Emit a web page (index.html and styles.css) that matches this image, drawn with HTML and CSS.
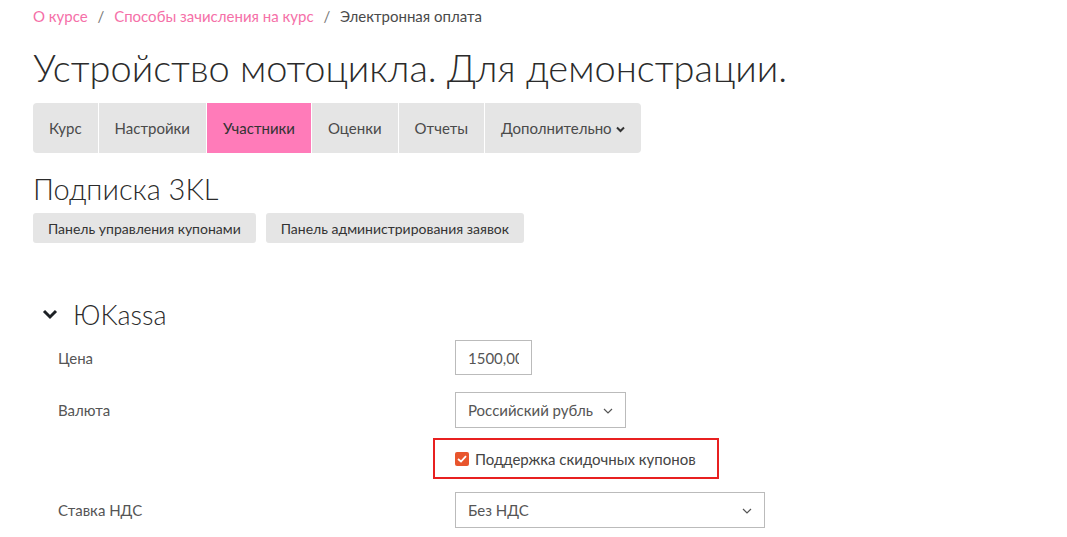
FILE: index.html
```html
<!DOCTYPE html>
<html lang="ru">
<head>
    <meta charset="UTF-8">
    <title>Электронная оплата</title>
    <link rel="stylesheet" href="styles.css">
</head>
<body>
    <div class="page">
        <nav class="breadcrumb">
            <a href="#">О курсе</a>
            <span class="sep">/</span>
            <a href="#">Способы зачисления на курс</a>
            <span class="sep">/</span>
            <span class="current">Электронная оплата</span>
        </nav>

        <h1 class="page-title">Устройство мотоцикла. Для демонстрации.</h1>

        <ul class="tabs">
            <li class="tab">Курс</li>
            <li class="tab">Настройки</li>
            <li class="tab active">Участники</li>
            <li class="tab">Оценки</li>
            <li class="tab">Отчеты</li>
            <li class="tab">Дополнительно
                <svg class="caret" width="9" height="7" viewBox="0 0 9 7"><path d="M1 1.5 L4.5 5 L8 1.5" fill="none" stroke="#333" stroke-width="2"/></svg>
            </li>
        </ul>

        <h2 class="plugin-title">Подписка 3KL</h2>
        <div class="actions">
            <button class="btn">Панель управления купонами</button>
            <button class="btn">Панель администрирования заявок</button>
        </div>

        <section class="fieldset">
            <div class="legend">
                <svg class="legend-icon" width="16" height="12" viewBox="0 0 16 12"><path d="M2 3 L8 9 L14 3" fill="none" stroke="#1d2125" stroke-width="3"/></svg>
                <span>ЮKassa</span>
            </div>

            <div class="form-row first">
                <label class="form-label">Цена</label>
                <div class="form-field"><input class="input price" type="text" value="1500,00"></div>
            </div>

            <div class="form-row second">
                <label class="form-label">Валюта</label>
                <div class="form-field">
                    <div class="select currency">Российский рубль
                        <svg class="select-arrow" width="10" height="6" viewBox="0 0 10 6"><path d="M1 1 L5 5 L9 1" fill="none" stroke="#555" stroke-width="1.2"/></svg>
                    </div>
                </div>
            </div>

            <div class="form-row check-row">
                <div class="form-label"></div>
                <div class="highlight">
                    <span class="checkbox">
                        <svg width="10" height="8" viewBox="0 0 10 8"><path d="M1 4 L4 6.5 L9 1.2" fill="none" stroke="#fff" stroke-width="1.8"/></svg>
                    </span>
                    <span class="check-label">Поддержка скидочных купонов</span>
                </div>
            </div>

            <div class="form-row">
                <label class="form-label">Ставка НДС</label>
                <div class="form-field">
                    <div class="select vat">Без НДС
                        <svg class="select-arrow" width="10" height="6" viewBox="0 0 10 6"><path d="M1 1 L5 5 L9 1" fill="none" stroke="#555" stroke-width="1.2"/></svg>
                    </div>
                </div>
            </div>
        </section>
    </div>
</body>
</html>
```

FILE: styles.css
```css
body, html {
    margin: 0;
    padding: 0;
    background-color: #fff;
    font-family: Lato, "Open Sans", sans-serif;
    color: #333;
    overflow: hidden;
}

.page {
    padding: 6px 0 0 33px;
}

.breadcrumb {
    font-size: 15px;
    line-height: 20px;
    color: #4a4a4a;
}

.breadcrumb a {
    color: #f570a8;
    text-decoration: none;
}

.breadcrumb .sep {
    color: #777;
    margin: 0 6px;
}

.page-title {
    font-size: 38px;
    font-weight: 300;
    margin: 18px 0 0 0;
    line-height: 46px;
    color: #2b2b2b;
}

.tabs {
    list-style: none;
    display: flex;
    margin: 13px 0 0 0;
    padding: 0;
    width: max-content;
    border-radius: 4px;
    overflow: hidden;
}

.tab {
    background-color: #e5e5e5;
    line-height: 50px;
    padding: 0 16px;
    font-size: 15px;
    color: #4a4a4a;
    border-left: 1px solid #fff;
}

.tab:first-child {
    border-left: none;
}

.tab.active {
    background-color: #ff7bb9;
    color: #333;
}

.caret {
    margin-left: 1px;
    vertical-align: 1px;
}

.plugin-title {
    font-size: 29px;
    font-weight: 300;
    margin: 18px 0 0 0;
    line-height: 36px;
    color: #2b2b2b;
}

.actions {
    display: flex;
    gap: 10px;
    margin-top: 6px;
}

.btn {
    font-family: inherit;
    font-size: 14px;
    color: #333;
    background-color: #e5e5e5;
    border: none;
    border-radius: 3px;
    height: 30px;
    padding: 0 15px;
}

.fieldset {
    margin-top: 56px;
}

.legend {
    display: flex;
    align-items: center;
    font-size: 27px;
    font-weight: 300;
    color: #2b2b2b;
    height: 30px;
}

.legend-icon {
    margin: 0 15px 0 9px;
}

.form-row {
    display: flex;
    align-items: center;
    margin-top: 13px;
}

.form-row.first {
    margin-top: 11px;
}

.form-row.second {
    margin-top: 17px;
}

.form-label {
    width: 397px;
    padding-left: 25px;
    font-size: 15px;
    color: #555;
}

.input {
    font-family: inherit;
    font-size: 15px;
    color: #555;
    border: 1px solid #bbb;
    height: 35px;
    box-sizing: border-box;
    padding: 0 12px;
    width: 77px;
    margin: 0;
}

.select {
    position: relative;
    box-sizing: border-box;
    height: 36px;
    border: 1px solid #bbb;
    font-size: 15px;
    color: #555;
    line-height: 34px;
    padding: 0 12px;
}

.currency {
    width: 171px;
}

.vat {
    width: 310px;
}

.select-arrow {
    position: absolute;
    right: 12px;
    top: 15px;
}

.check-row {
    margin-top: 10px;
}

.check-row .form-label {
    width: 375px;
}

.highlight {
    display: flex;
    align-items: center;
    box-sizing: border-box;
    width: 286px;
    height: 41px;
    border: 2px solid #e82020;
    padding-left: 20px;
}

.checkbox {
    display: inline-flex;
    align-items: center;
    justify-content: center;
    width: 14px;
    height: 14px;
    border-radius: 2px;
    background-color: #e8552d;
    margin-right: 6px;
}

.check-label {
    font-size: 15px;
    color: #444;
}
```
